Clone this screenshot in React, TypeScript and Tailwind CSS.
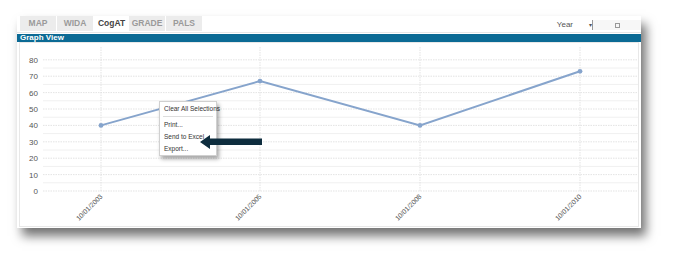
import React from "react";

const yTicks = [0, 10, 20, 30, 40, 50, 60, 70, 80];
const pts = [
  { x: 84, v: 40, label: "10/01/2003" },
  { x: 243, v: 67, label: "10/01/2005" },
  { x: 403, v: 40, label: "10/01/2008" },
  { x: 563, v: 73, label: "10/01/2010" },
];
const yOf = (v: number) => 148 - 1.64 * v;

function Chart() {
  return (
    <svg width="622" height="183" className="block" style={{ fontFamily: '"Liberation Sans", Arial, sans-serif' }}>
      {yTicks.map((t) => (
        <g key={t}>
          <line x1={26} x2={621} y1={yOf(t)} y2={yOf(t)} stroke="#dcdcdc" strokeWidth={0.8} strokeDasharray="1.5 1" />
          {t < 80 && (
            <line x1={26} x2={621} y1={yOf(t + 5)} y2={yOf(t + 5)} stroke="#f0f0f0" strokeWidth={1} />
          )}
          <text x={21} y={yOf(t) + 3} fontSize={8} fill="#555" textAnchor="end">
            {t}
          </text>
        </g>
      ))}
      {pts.map((p) => (
        <g key={p.label}>
          <line x1={p.x} x2={p.x} y1={4} y2={148} stroke="#dcdcdc" strokeWidth={0.8} strokeDasharray="1.5 1" />
          <text
            x={p.x + 2}
            y={yOf(0) + 6}
            fontSize={6.8}
            fill="#555"
            textAnchor="end"
            transform={`rotate(-45 ${p.x + 2} ${yOf(0) + 6})`}
          >
            {p.label}
          </text>
        </g>
      ))}
      <polyline
        points={pts.map((p) => `${p.x},${yOf(p.v)}`).join(" ")}
        fill="none"
        stroke="#86a4cc"
        strokeWidth={2}
      />
      {pts.map((p) => (
        <circle key={p.label + "c"} cx={p.x} cy={yOf(p.v)} r={2.4} fill="#86a4cc" />
      ))}
    </svg>
  );
}

export default function App() {
  const tabs = ["MAP", "WIDA", "CogAT", "GRADE", "PALS"];
  return (
    <div
      className="w-[674px] h-[268px] bg-white pl-[17px] pt-[16px] overflow-hidden"
      style={{ fontFamily: '"Liberation Sans", Arial, sans-serif' }}
    >
      <div className="relative w-[624px] h-[212px] bg-white shadow-[5px_8px_10px_rgba(0,0,0,0.55)] flex flex-col">
        <div className="h-[18px] flex items-end pl-[3px] border-b border-[#e6e6e6] relative">
          {tabs.map((t) => (
            <div
              key={t}
              className={`h-[15px] mb-[1px] flex items-center justify-center text-[8.5px] font-bold ${
                t === "CogAT" ? "bg-white text-[#444] w-[35px]" : "bg-[#ececec] text-[#9a9a9a] mr-[1px] w-[36px]"
              }`}
            >
              {t}
            </div>
          ))}
          <div className="absolute right-0 top-[3px] flex items-center">
            <span className="text-[8px] text-[#555] mr-[16px]">Year</span>
            <span className="text-[6px] text-[#555] leading-none">▾</span>
            <div className="w-[49px] h-[10px] border-l border-[#999] bg-[#f7f7f7] flex items-center justify-center">
              <div className="w-[5px] h-[5px] border border-[#999]" />
            </div>
          </div>
        </div>
        <div className="h-[9px] mt-[1px] bg-[#0b6a94] flex items-center pl-[3px]">
          <span className="text-[8px] font-bold text-white leading-none">Graph View</span>
        </div>
        <div className="flex-1 border border-[#e8e8e8] mx-[2px] mb-[1px] relative">
          <div className="-ml-[3px]">
            <Chart />
          </div>
          <div className="absolute left-[139px] top-[58px] w-[58px] h-[55px] bg-white border border-[#d0d0d0] shadow-[2px_3px_4px_rgba(0,0,0,0.35)] text-[6.5px] text-[#333] flex flex-col pt-[2px]">
            <div className="px-[4px] h-[10px] flex items-center whitespace-nowrap">Clear All Selections</div>
            <div className="mx-[3px] my-[2px] border-t border-[#ddd]" />
            <div className="px-[4px] h-[12px] flex items-center">Print...</div>
            <div className="px-[4px] h-[12px] flex items-center">Send to Excel</div>
            <div className="px-[4px] h-[12px] flex items-center">Export...</div>
          </div>
          <svg className="absolute left-[180px] top-[92px]" width="64" height="14">
            <polygon points="0,7 10,0 10,3.5 62,3.5 62,10 10,10 10,14" fill="#0e2d3e" />
          </svg>
        </div>
      </div>
    </div>
  );
}
